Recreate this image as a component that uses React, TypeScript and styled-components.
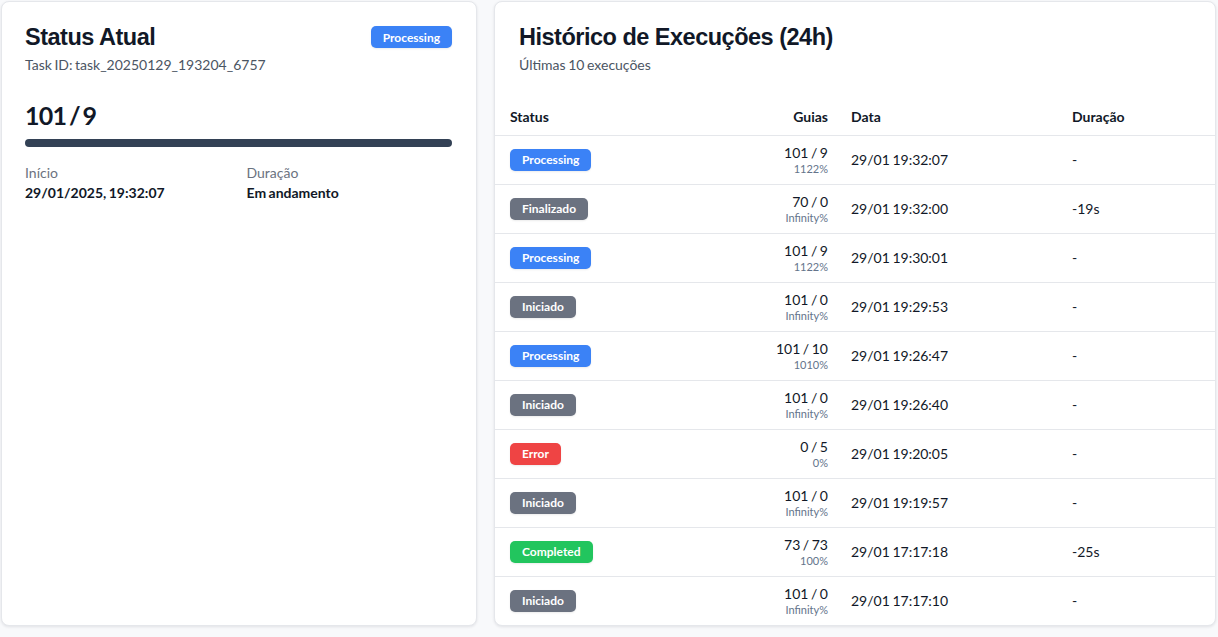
import React from 'react';
import styled, { createGlobalStyle } from 'styled-components';

type Status = 'Processing' | 'Finalizado' | 'Iniciado' | 'Error' | 'Completed';

const statusColors: Record<Status, string> = {
  Processing: '#3b82f6',
  Finalizado: '#6b7280',
  Iniciado: '#6b7280',
  Error: '#ef4444',
  Completed: '#22c55e',
};

const rows: { status: Status; guias: string; pct: string; data: string; dur: string }[] = [
  { status: 'Processing', guias: '101 / 9', pct: '1122%', data: '29/01 19:32:07', dur: '-' },
  { status: 'Finalizado', guias: '70 / 0', pct: 'Infinity%', data: '29/01 19:32:00', dur: '-19s' },
  { status: 'Processing', guias: '101 / 9', pct: '1122%', data: '29/01 19:30:01', dur: '-' },
  { status: 'Iniciado', guias: '101 / 0', pct: 'Infinity%', data: '29/01 19:29:53', dur: '-' },
  { status: 'Processing', guias: '101 / 10', pct: '1010%', data: '29/01 19:26:47', dur: '-' },
  { status: 'Iniciado', guias: '101 / 0', pct: 'Infinity%', data: '29/01 19:26:40', dur: '-' },
  { status: 'Error', guias: '0 / 5', pct: '0%', data: '29/01 19:20:05', dur: '-' },
  { status: 'Iniciado', guias: '101 / 0', pct: 'Infinity%', data: '29/01 19:19:57', dur: '-' },
  { status: 'Completed', guias: '73 / 73', pct: '100%', data: '29/01 17:17:18', dur: '-25s' },
  { status: 'Iniciado', guias: '101 / 0', pct: 'Infinity%', data: '29/01 17:17:10', dur: '-' },
];

const GlobalStyle = createGlobalStyle`
  * { box-sizing: border-box; }
  body {
    margin: 0;
    background: #f8f9fb;
    font-family: Lato, "Noto Sans", sans-serif;
    color: #111827;
    word-spacing: -1px;
  }
`;

const Page = styled.div`
  display: grid;
  grid-template-columns: 476px 1fr;
  gap: 17px;
  padding: 1px 2px 10px 1px;
  height: 637px;
`;

const Card = styled.section`
  background: #fff;
  border: 1px solid #e5e7eb;
  border-radius: 8px;
  box-shadow: 0 1px 3px rgba(15, 23, 42, 0.1);
  height: 625px;
  overflow: hidden;
`;

const LeftCard = styled(Card)`
  padding: 19px 24px 19px 23px;
`;

const HeadRow = styled.div`
  display: flex;
  justify-content: space-between;
  align-items: center;
`;

const Title = styled.h2`
  margin: 0;
  font-family: "Liberation Sans", Arial, sans-serif;
  font-weight: 700;
  font-size: 23.5px;
  letter-spacing: -0.5px;
  word-spacing: 0;
  line-height: 32px;
  color: #111827;
`;

const Sub = styled.div`
  margin-top: 2px;
  font-size: 14px;
  line-height: 20px;
  color: #4b5563;
`;

const Badge = styled.span<{ $color: string }>`
  display: inline-flex;
  align-items: center;
  height: 22px;
  padding: 0 12px;
  border-radius: 5px;
  background: ${(p) => p.$color};
  color: #fff;
  font-size: 12px;
  font-weight: 700;
  word-spacing: 0;
  box-shadow: 0 1px 2px rgba(0, 0, 0, 0.08);
`;

const BigCount = styled.div`
  margin-top: 24px;
  font-size: 25px;
  font-weight: 700;
  line-height: 32px;
  letter-spacing: -0.8px;
  word-spacing: -2.5px;
`;

const Bar = styled.div`
  margin-top: 8px;
  height: 8px;
  border-radius: 4px;
  background: #334155;
`;

const InfoGrid = styled.div`
  display: grid;
  grid-template-columns: 1fr 1fr;
  column-gap: 16px;
  margin-top: 16px;
`;

const Label = styled.div`
  font-size: 14px;
  line-height: 20px;
  color: #6b7280;
`;

const Value = styled.div`
  font-size: 14px;
  line-height: 20px;
  font-weight: 700;
  color: #111827;
`;

const RightHead = styled.div`
  padding: 19px 24px 24px;
`;

const Grid = styled.div`
  display: grid;
  grid-template-columns: 180px 161px 228px 1fr;
`;

const Row = styled(Grid)`
  height: 49px;
  border-top: 1px solid #e5e7eb;
  align-items: center;
`;

const HeaderRow = styled(Grid)`
  height: 36px;
  align-items: center;
  font-size: 14px;
  font-weight: 700;
`;

const Cell = styled.div<{ $pl?: number; $right?: boolean }>`
  padding: 0 8px 0 ${(p) => p.$pl ?? 8}px;
  text-align: ${(p) => (p.$right ? 'right' : 'left')};
  font-size: 14px;
  line-height: 20px;
`;

const Guias = styled.div`
  font-size: 14px;
  line-height: 17px;
`;

const Pct = styled.div`
  font-size: 11px;
  line-height: 15px;
  color: #64748b;
`;

export default function App() {
  return (
    <>
      <GlobalStyle />
      <Page>
        <LeftCard>
          <HeadRow>
            <Title>Status Atual</Title>
            <Badge $color={statusColors.Processing}>Processing</Badge>
          </HeadRow>
          <Sub>Task ID: task_20250129_193204_6757</Sub>
          <BigCount>101 / 9</BigCount>
          <Bar />
          <InfoGrid>
            <div>
              <Label>Início</Label>
              <Value>29/01/2025, 19:32:07</Value>
            </div>
            <div>
              <Label>Duração</Label>
              <Value>Em andamento</Value>
            </div>
          </InfoGrid>
        </LeftCard>
        <Card>
          <RightHead>
            <Title>Histórico de Execuções (24h)</Title>
            <Sub>Últimas 10 execuções</Sub>
          </RightHead>
          <HeaderRow>
            <Cell $pl={15}>Status</Cell>
            <Cell $right>Guias</Cell>
            <Cell $pl={15}>Data</Cell>
            <Cell>Duração</Cell>
          </HeaderRow>
          {rows.map((r, i) => (
            <Row key={i}>
              <Cell $pl={15}>
                <Badge $color={statusColors[r.status]}>{r.status}</Badge>
              </Cell>
              <Cell $right>
                <Guias>{r.guias}</Guias>
                <Pct>{r.pct}</Pct>
              </Cell>
              <Cell $pl={15}>{r.data}</Cell>
              <Cell>{r.dur}</Cell>
            </Row>
          ))}
        </Card>
      </Page>
    </>
  );
}
